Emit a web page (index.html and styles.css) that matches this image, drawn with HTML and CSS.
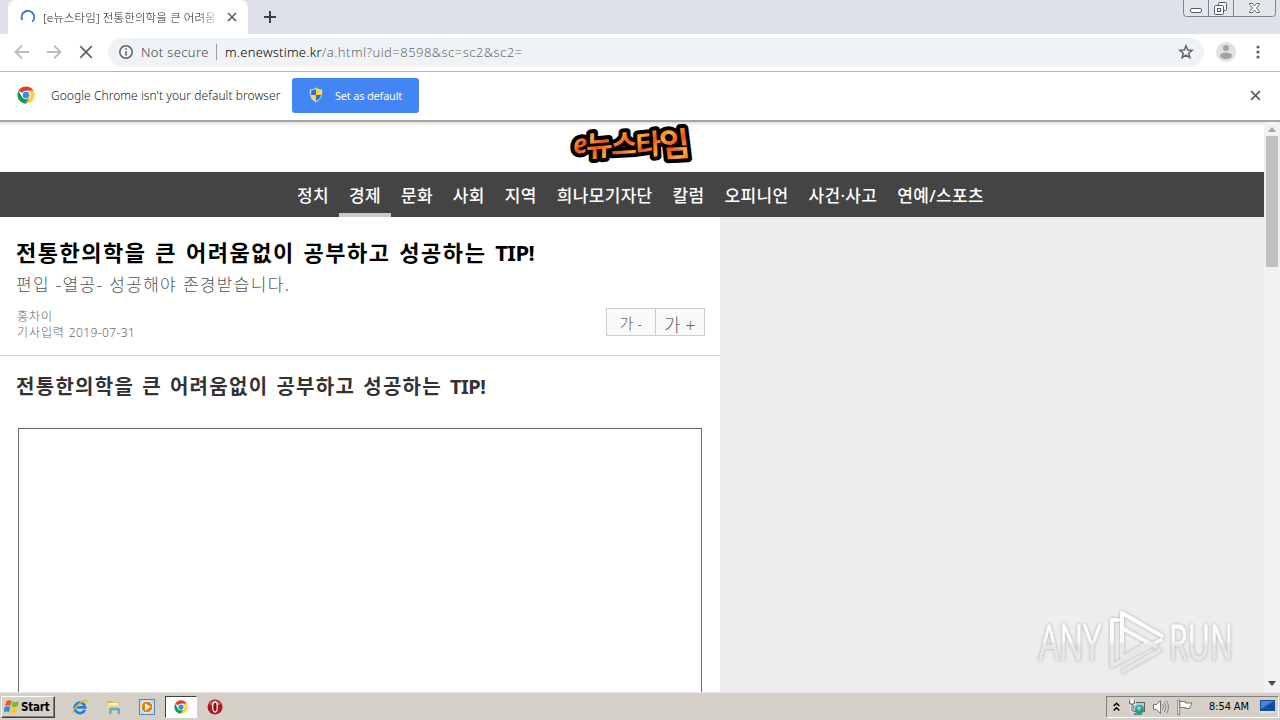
FILE: index.html
```html
<!DOCTYPE html>
<html lang="ko">
<head>
    <meta charset="UTF-8">
    <title>e뉴스타임</title>
    <link rel="stylesheet" href="styles.css">
</head>
<body>
    <!-- shared icons -->
    <svg class="defs" width="0" height="0">
        <defs>
            <symbol id="chrome" viewBox="0 0 48 48">
                <circle cx="24" cy="24" r="23" fill="#fff"/>
                <path d="M24 24 4.1 12.5A23 23 0 0 1 43.9 12.5L24 12.5Z" fill="#e33b2e"/>
                <path d="M4.1 12.5A23 23 0 0 0 24 47L34 29.7 24 24 14 29.7Z" fill="#109d58"/>
                <path d="M43.9 12.5A23 23 0 0 1 24 47L34 29.7A11.5 11.5 0 0 0 24 12.5Z" fill="#fdce42"/>
                <circle cx="24" cy="24" r="11.5" fill="#fff"/>
                <circle cx="24" cy="24" r="9" fill="#4285f4"/>
            </symbol>
            <symbol id="cross" viewBox="0 0 10 10">
                <path d="M1 1 9 9M9 1 1 9" fill="none" stroke="currentColor" stroke-width="1.7"/>
            </symbol>
        </defs>
    </svg>

    <!-- Tabs -->
    <div class="tabstrip">
        <div class="tab">
            <svg class="spinner" width="16" height="16" viewBox="0 0 16 16"><path d="M2.300 11A6.300 6.300 0 1 1 12.200 12.800" fill="none" stroke="#3b78e7" stroke-width="2"/></svg>
            <span class="tab-title">[e뉴스타임] 전통한의학을 큰 어려움</span>
            <svg class="tab-close" width="10" height="10"><use href="#cross"/></svg>
        </div>
        <svg class="new-tab" width="12" height="12" viewBox="0 0 12 12"><path d="M6 0V12M0 6H12" stroke="#3c4043" stroke-width="2"/></svg>
        <svg class="window-buttons" width="94" height="17" viewBox="0 0 94 17">
            <path d="M.5 0V13.5Q.5 16.5 3.5 16.5H89.500Q92.500 16.500 92.500 13.500V0M25.500 0V16M50.500 0V16" fill="#e3e6eb" stroke="#7c828f"/>
            <rect x="7.500" y="8.500" width="11" height="4" rx="1.500" fill="#fff" stroke="#555b68"/>
            <rect x="35.500" y="2.500" width="8" height="8" rx="1" fill="#fff" stroke="#555b68"/>
            <rect x="31.500" y="5.500" width="9" height="9" rx="1" fill="#fff" stroke="#555b68"/>
            <rect x="34.500" y="8.500" width="3" height="3" fill="#fff" stroke="#555b68"/>
            <path d="M66.500 3.500H69.500L71.500 6 73.500 3.500H76.500V4.500L73.500 8 76.500 11.500V12.500H73.500L71.500 10 69.500 12.500H66.500V11.500L69.500 8 66.500 4.500Z" fill="#fff" stroke="#555b68" stroke-width=".9"/>
        </svg>
    </div>

    <!-- Toolbar -->
    <div class="toolbar">
        <svg class="tool" width="16" height="16" viewBox="0 0 16 16"><path d="M15 8H2M8 1.500 1.500 8 8 14.500" fill="none" stroke="#babcbe" stroke-width="1.800"/></svg>
        <svg class="tool" width="16" height="16" viewBox="0 0 16 16"><path d="M1 8H14M8 1.500 14.500 8 8 14.500" fill="none" stroke="#babcbe" stroke-width="1.800"/></svg>
        <svg class="tool" width="16" height="16" viewBox="0 0 16 16"><path d="M2.200 2.200 13.800 13.800M13.800 2.200 2.200 13.800" fill="none" stroke="#5f6368" stroke-width="1.800"/></svg>
        <div class="omnibox">
            <svg width="14" height="14" viewBox="0 0 14 14"><circle cx="7" cy="7" r="6.200" fill="none" stroke="#5f6368" stroke-width="1.500"/><path d="M7 3.300V4.800M7 6.200V10.600" stroke="#5f6368" stroke-width="1.600"/></svg>
            <span class="secure">Not secure</span>
            <span class="url"><b>m.enewstime.kr</b><span class="path">/a.html?uid=8598&amp;sc=sc2&amp;sc2=</span></span>
            <svg class="star" width="16" height="16" viewBox="0 0 16 16"><path d="M8 1.800 9.700 6 14.200 6.300 10.700 9.200 11.900 13.700 8 11.200 4.100 13.700 5.300 9.200 1.800 6.300 6.300 6Z" fill="none" stroke="#5f6368" stroke-width="1.500"/></svg>
        </div>
        <svg class="avatar" width="20" height="20" viewBox="0 0 20 20"><circle cx="10" cy="10" r="10" fill="#dfe0e2"/><circle cx="10" cy="6" r="3" fill="#a1a2a4"/><ellipse cx="10" cy="13.700" rx="6" ry="3.200" fill="#a1a2a4"/></svg>
        <svg class="menu" width="4" height="14" viewBox="0 0 4 14"><circle cx="2" cy="2" r="1.600"/><circle cx="2" cy="7" r="1.600"/><circle cx="2" cy="12" r="1.600"/></svg>
    </div>

    <!-- Infobar -->
    <div class="infobar">
        <svg width="18" height="18"><use href="#chrome"/></svg>
        <span class="info-text">Google Chrome isn't your default browser</span>
        <button class="default-btn">
            <svg width="14" height="16" viewBox="0 0 14 16">
                <path d="M7 .5Q4 2.500.7 2.500 0 12 7 15.500 14 12 13.300 2.500 10 2.500 7 .5Z" fill="#dfe5ec" stroke="#7f99b7" stroke-width=".6"/>
                <path d="M7 2Q5 3.300 2.200 3.600L2 8H7Z" fill="#2f6fd0"/>
                <path d="M7 2Q9 3.300 11.800 3.600L12 8H7Z" fill="#ffd42e"/>
                <path d="M2 8H7V14Q2.800 12 2 8Z" fill="#ffd42e"/>
                <path d="M12 8H7V14Q11.200 12 12 8Z" fill="#2f6fd0"/>
            </svg>
            <span>Set as default</span>
        </button>
        <svg class="info-close" width="11" height="11"><use href="#cross"/></svg>
    </div>

    <!-- Page -->
    <div class="viewport">
        <div class="page">
            <header class="site-header">
                <svg width="128" height="46" viewBox="0 0 128 46">
                    <defs>
                        <linearGradient id="fire" x1="0" y1="0" x2="7" y2="9" gradientUnits="userSpaceOnUse" spreadMethod="reflect">
                            <stop offset="0" stop-color="#e8501c"/>
                            <stop offset=".5" stop-color="#f77f20"/>
                            <stop offset="1" stop-color="#ffad35"/>
                        </linearGradient>
                        <g id="logo">
                            <text transform="translate(5 31) rotate(-8)" class="logo-e">e</text>
                            <text transform="translate(17 34) rotate(-5) skewX(-5)" font-size="29">뉴</text>
                            <text transform="translate(42 32) rotate(-3) skewX(-5)" font-size="28">스</text>
                            <text transform="translate(67 33) rotate(-6) skewX(-3)" font-size="28">타</text>
                            <text transform="translate(92 34) rotate(-3) skewX(4)" font-size="33">임</text>
                        </g>
                    </defs>
                    <use href="#logo" class="logo-outline"/>
                    <use href="#logo" class="logo-fill"/>
                </svg>
            </header>
            <nav class="site-nav">
                <a>정치</a>
                <a class="on">경제</a>
                <a>문화</a>
                <a>사회</a>
                <a>지역</a>
                <a>희나모기자단</a>
                <a>칼럼</a>
                <a>오피니언</a>
                <a>사건·사고</a>
                <a>연예/스포츠</a>
            </nav>
            <article class="article">
                <div class="article-head">
                    <h1>전통한의학을 큰 어려움없이 공부하고 성공하는 <span>TIP!</span></h1>
                    <h2>편입 -열공- 성공해야 존경받습니다.</h2>
                    <div class="meta">
                        <p>홍차이<br>기사입력 <span>2019-07-31</span></p>
                        <div class="font-size">
                            <span class="small">가 -</span>
                            <span class="large">가 +</span>
                        </div>
                    </div>
                </div>
                <div class="article-body">
                    <h3>전통한의학을 큰 어려움없이 공부하고 성공하는 <span>TIP!</span></h3>
                    <div class="frame"></div>
                </div>
            </article>
        </div>
        <div class="scrollbar">
            <svg width="8" height="5" viewBox="0 0 8 5"><path d="M0 5 4 0 8 5Z" fill="#a0a0a0"/></svg>
            <div class="thumb"></div>
            <svg width="8" height="5" viewBox="0 0 8 5"><path d="M0 0 4 5 8 0Z" fill="#484848"/></svg>
        </div>
        <svg class="watermark" width="204" height="72" viewBox="0 0 204 72">
            <defs>
                <linearGradient id="fade" x1="0" y1="4" x2="0" y2="66" gradientUnits="userSpaceOnUse">
                    <stop offset="0" stop-color="#fff"/>
                    <stop offset=".5" stop-color="#fafafa"/>
                    <stop offset=".56" stop-color="#e8e8e8"/>
                    <stop offset="1" stop-color="#e6e6e6"/>
                </linearGradient>
            </defs>
            <text class="wm-text" x="5" y="54" textLength="62" lengthAdjust="spacingAndGlyphs">ANY</text>
            <text class="wm-text" x="135" y="54" textLength="64" lengthAdjust="spacingAndGlyphs">RUN</text>
            <g fill="none" stroke="url(#fade)" stroke-width="4" stroke-linecap="round" stroke-linejoin="round">
                <path d="M88 52V7L128 30"/>
                <path d="M84 14H78V60L127 34"/>
                <path d="M88 22 122 41M89 65 126 44M88 52 112 38"/>
            </g>
        </svg>
    </div>

    <!-- Taskbar -->
    <div class="taskbar">
        <div class="start">
            <svg width="16" height="16" viewBox="0 0 16 16">
                <path d="M2.500 2Q5 .5 7.700 2L6.500 7Q4 5.700 1 7Z" fill="#ee5b20"/>
                <path d="M8.700 2.500Q11.500 4 15 2.500L13.500 7.500Q10.500 9 7.500 7.500Z" fill="#7fb93c"/>
                <path d="M.8 8Q3.500 6.700 6.300 8L5 13Q2.500 11.800-.5 13Z" fill="#3b87d8"/>
                <path d="M7.300 8.500Q10 10 13.300 8.500L12 13.500Q9 15 6 13.500Z" fill="#fbc52a"/>
            </svg>
            <span>Start</span>
        </div>
        <div class="launch">
            <svg width="16" height="16" viewBox="0 0 16 16">
                <path d="M12.900 10.700A5.300 5.300 0 1 1 13.200 8.300H4.500" fill="none" stroke="#2382d8" stroke-width="2.700"/>
                <path d="M1.500 14.500Q-.5 13 4.500 7.500 10 2 13.500 1.200 16 1 14.500 4" fill="none" stroke="#e9b62c" stroke-width="1.300"/>
            </svg>
        </div>
        <div class="launch">
            <svg width="16" height="16" viewBox="0 0 16 16">
                <path d="M1 2H6L7 3.500H14V13H1Z" fill="#dfb54b"/>
                <path d="M2 4H13V7H2Z" fill="#fff3b5"/>
                <path d="M1 6H14V13H1Z" fill="#f6d978"/>
                <path d="M3 15V10Q3 8.500 5 8.500H12Q14 8.500 14 10V15H11.500V11.500H5.500V15Z" fill="#5fade0"/>
            </svg>
        </div>
        <div class="launch">
            <svg width="16" height="16" viewBox="0 0 16 16">
                <rect x=".5" y=".5" width="15" height="15" fill="#b9dcf5" stroke="#4b8bc8"/>
                <circle cx="8" cy="8" r="6" fill="#f07f13" stroke="#fff"/>
                <path d="M6 4.500 11.500 8 6 11.500Z" fill="#fff"/>
            </svg>
        </div>
        <div class="launch active"><svg width="14" height="14"><use href="#chrome"/></svg></div>
        <div class="launch">
            <svg width="16" height="16" viewBox="0 0 16 16">
                <circle cx="8" cy="8" r="7.500" fill="#b51620"/>
                <path d="M2 5Q8-2 14 5Q8 8 2 5Z" fill="#d86468"/>
                <ellipse cx="8" cy="8" rx="2.300" ry="5" fill="#8d0b12" stroke="#fff" stroke-width="1.300"/>
            </svg>
        </div>
        <div class="tray">
            <svg width="7" height="10" viewBox="0 0 7 10"><path d="M.7 4 3.500 1.200 6.300 4M.7 8.500 3.500 5.700 6.300 8.500" fill="none" stroke="#000" stroke-width="1.500"/></svg>
            <svg class="net" width="16" height="16" viewBox="0 0 16 16">
                <rect x="4.500" y="3.500" width="11" height="9" fill="#9fd0dc" stroke="#5b666c"/>
                <path d="M5 15H13" stroke="#666" stroke-width="1.500"/>
                <path d="M.7 1V5H5.300V1M3 0V5V12H5" fill="none" stroke="#fff" stroke-width="2.500"/>
                <path d="M.7 1V5H5.300V1M3 5V12H5" fill="none" stroke="#555" stroke-width="1"/>
                <circle cx="10.500" cy="10.500" r="4.500" fill="#2b9a8e"/>
                <path d="M7.500 9Q10 6 12.500 8.500L10 12Z" fill="#8ed9b4"/>
            </svg>
            <svg class="sound" width="16" height="16" viewBox="0 0 16 16">
                <path d="M.5 5.500H3.500L7.500 1.500V14.500L3.500 10.500H.5Z" fill="#fff" stroke="#777"/>
                <path d="M9.500 5Q11.500 8 9.500 11M11.500 3Q14.500 8 11.500 13M13.500 1.500Q17.500 8 13.500 14.500" fill="none" stroke="#888"/>
            </svg>
            <svg class="flag" width="16" height="16" viewBox="0 0 16 16">
                <path d="M.8 1H2.700V15.500H.8Z" fill="#fff" stroke="#666" stroke-width=".8"/>
                <path d="M2.800 2.500H8.500V4H15L12.500 9.500H8.500V8.500H2.800Z" fill="#fff" stroke="#666" stroke-width=".9"/>
            </svg>
            <span class="clock">8:54 AM</span>
            <svg class="desktop" width="15" height="13" viewBox="0 0 15 13">
                <rect width="15" height="11" fill="#164d9f"/>
                <path d="M1 1H14L1 9Z" fill="#4387d3"/>
                <path d="M1 12H14" stroke="#dce8f7" stroke-width="1.500"/>
            </svg>
        </div>
    </div>
</body>
</html>
```

FILE: styles.css
```css
* {
    box-sizing: border-box;
}

body {
    display: flex;
    flex-direction: column;
    width: 1280px;
    height: 720px;
    margin: 0;
    overflow: hidden;
    background-color: #fff;
    font-family: "Noto Sans", "Noto Sans CJK KR", sans-serif;
}

svg {
    display: block;
    flex: none;
}

h1, h2, h3, p {
    margin: 0;
    white-space: nowrap;
}

.defs {
    position: absolute;
}

/* browser */
.tabstrip {
    display: flex;
    height: 34px;
    padding-left: 8px;
    background-color: #dee1e8;
}

.tab {
    display: flex;
    align-items: center;
    width: 240px;
    padding: 0 11px 0 12px;
    background-color: #fff;
    border-radius: 8px 8px 0 0;
}

.tab-title {
    width: 178px;
    margin: 0 6px 0 7px;
    white-space: nowrap;
    font-size: 11.500px;
    font-weight: 300;
    letter-spacing: 0.1px;
    color: #202124;
    -webkit-mask-image: linear-gradient(to right, #000 88%, transparent);
    mask-image: linear-gradient(to right, #000 88%, transparent);
}

.tab-close {
    color: #5f6368;
}

.new-tab {
    margin: 11px 0 0 16px;
}

.window-buttons {
    margin: 0 3px 0 auto;
}

.toolbar {
    display: flex;
    align-items: center;
    height: 38px;
    padding: 0 20px 2px 14px;
    border-bottom: 1px solid #b5b6b9;
}

.tool {
    margin-right: 16px;
}

.omnibox {
    display: flex;
    align-items: center;
    width: 1096px;
    height: 28px;
    margin-left: -2px;
    padding: 0 10px 0 11px;
    border-radius: 14px;
    background-color: #f0f3f5;
    font-size: 13px;
    font-weight: 300;
    color: #45484c;
}

.secure {
    width: 76px;
    margin-left: 8px;
    border-right: 1px solid #9a9da1;
    line-height: 16px;
    letter-spacing: 0.35px;
    white-space: nowrap;
}

.url {
    margin-left: 8px;
    letter-spacing: 0.46px;
}

.url b {
    font-weight: 300;
    letter-spacing: 0.25px;
    color: #000;
}

.path {
    color: #66696d;
}

.star {
    margin-left: auto;
}

.avatar {
    margin-left: 12px;
}

.menu {
    margin-left: auto;
    fill: #5f6368;
}

.infobar {
    display: flex;
    align-items: center;
    height: 50px;
    padding: 0 19px 2px 17px;
    border-bottom: 2px solid #a6a6a6;
    color: #202124;
    font-size: 12px;
    font-weight: 300;
}

.info-text {
    width: 228px;
    margin: 0 13px 0 16px;
    white-space: nowrap;
    letter-spacing: 0.05px;
}

.default-btn {
    display: flex;
    align-items: center;
    gap: 12px;
    width: 127px;
    height: 35px;
    padding: 0 0 0 17px;
    border: none;
    border-radius: 3px;
    background-color: #4285f4;
    color: #fff;
    font-family: inherit;
    font-size: 11px;
    letter-spacing: -0.2px;
    white-space: nowrap;
}

.info-close {
    margin-left: auto;
    color: #5f6368;
}

/* site */
.viewport {
    position: relative;
    display: flex;
    height: 570px;
    overflow: hidden;
    background-color: #ededed;
}

.page {
    width: 1264px;
}

.site-header {
    display: flex;
    height: 50px;
    padding: 1px 0 0 569px;
    background: linear-gradient(#e0e0e0, #fff 4px);
}

.site-header text {
    font-family: "Noto Sans CJK KR", sans-serif;
    font-weight: 700;
}

.site-header .logo-e {
    font-family: "Open Sans", sans-serif;
    font-size: 26px;
    font-style: italic;
}

.logo-outline {
    fill: #000;
    stroke: #000;
    stroke-width: 8px;
    stroke-linejoin: round;
}

.logo-fill {
    fill: url(#fire);
}

.site-nav {
    display: flex;
    height: 45px;
    padding-left: 287px;
    background-color: #444;
}

.site-nav a {
    padding: 0 10px;
    color: #fff;
    font-size: 17px;
    font-weight: 500;
    line-height: 48px;
    letter-spacing: 0.33px;
    white-space: nowrap;
}

.site-nav .on {
    border-bottom: 4px solid #cbc9ca;
}

.article {
    width: 720px;
    height: 475px;
    background-color: #fff;
}

.article-head {
    height: 139px;
    padding: 19px 15px 0 16px;
    border-bottom: 1px solid #ccc;
}

h1 {
    color: #000;
    font-size: 22px;
    line-height: 32px;
    letter-spacing: 1.530px;
    word-spacing: 1.500px;
}

h1 span, h3 span {
    letter-spacing: -0.5px;
}

h2 {
    color: #555;
    font-size: 17px;
    font-weight: 300;
    line-height: 34px;
    letter-spacing: 1.350px;
}

.meta {
    display: flex;
    justify-content: space-between;
    padding: 6px 0 0 1px;
}

.meta p {
    padding-top: 1px;
    color: #666;
    font-size: 12px;
    font-weight: 300;
    line-height: 16px;
    letter-spacing: 0.9px;
}

.meta p span {
    letter-spacing: 0.4px;
}

.font-size {
    display: flex;
    width: 99px;
    height: 28px;
    border: 1px solid #ccc;
    background-color: #f9f9f9;
    color: #666;
    font-weight: 300;
    line-height: 28px;
    text-align: center;
}

.small {
    width: 49px;
    border-right: 1px solid #ccc;
    font-size: 15px;
}

.large {
    width: 49px;
    font-size: 18px;
    line-height: 32px;
}

.article-body {
    height: 336px;
    padding: 17px 18px 0;
    overflow: hidden;
}

h3 {
    margin-left: -2px;
    color: #333;
    font-size: 20px;
    line-height: 28px;
    letter-spacing: 1.300px;
    word-spacing: 1.500px;
}

.frame {
    height: 400px;
    margin-top: 27px;
    border: 1px solid #666;
}

.scrollbar {
    display: flex;
    flex-direction: column;
    align-items: center;
    width: 16px;
    padding: 5px 0 6px;
    background-color: #f1f1f1;
}

.thumb {
    width: 12px;
    height: 131px;
    margin: 4px 0 auto;
    background-color: #c1c1c1;
}

.watermark {
    position: absolute;
    top: 484px;
    left: 1034px;
    filter: drop-shadow(0 0 1.500px #aaa);
}

.wm-text {
    fill: url(#fade);
    stroke: url(#fade);
    stroke-width: 0.8px;
    font-family: "Open Sans", "Noto Sans", sans-serif;
    font-size: 49px;
}

/* taskbar */
.taskbar {
    display: flex;
    align-items: center;
    height: 28px;
    padding-left: 1px;
    border-top: 1px solid #e8e5e0;
    background-color: #d4d0c8;
}

.start {
    display: flex;
    align-items: center;
    gap: 1px;
    width: 54px;
    height: 22px;
    margin-right: 9px;
    padding-left: 2px;
    border: 1px solid;
    border-color: #fff #404040 #404040 #fff;
    box-shadow: inset -1px -1px #808080;
    font-family: "DejaVu Sans Condensed", "DejaVu Sans", sans-serif;
    font-size: 11.500px;
    font-weight: bold;
    letter-spacing: -0.2px;
}

.launch {
    display: flex;
    align-items: center;
    justify-content: center;
    width: 32px;
    height: 22px;
    margin-right: 1.700px;
}

.launch.active {
    border: 1px solid;
    border-color: #404040 #fff #fff #404040;
    background-color: #fff;
}

.tray {
    display: flex;
    align-items: center;
    width: 173px;
    height: 22px;
    margin: 0 1px 0 auto;
    padding-left: 6px;
    border: 1px solid;
    border-color: #808080 #fff #fff #808080;
}

.net {
    margin-left: 9px;
}

.sound {
    margin-left: 8px;
}

.flag {
    margin-left: 8px;
}

.clock {
    width: 41px;
    margin-left: 16px;
    font-family: "DejaVu Sans Condensed", "DejaVu Sans", sans-serif;
    font-size: 11px;
    letter-spacing: -0.1px;
    white-space: nowrap;
}

.desktop {
    margin-left: 10px;
}
```
